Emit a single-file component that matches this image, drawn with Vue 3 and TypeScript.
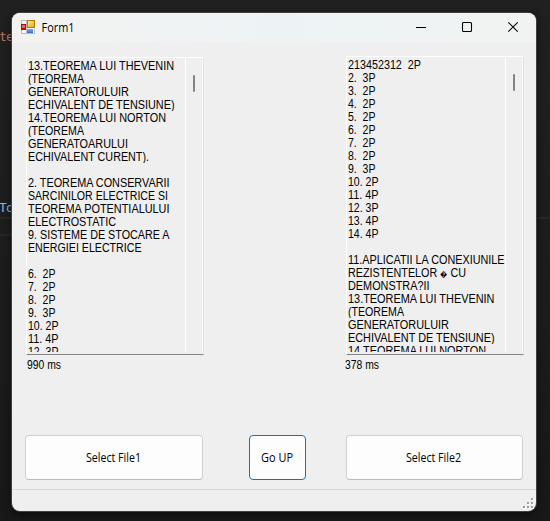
<script setup lang="ts">
interface Line {
  text: string
  width: number
}

interface Panel {
  id: string
  lines: Line[]
  elapsed: Line
}

const line = (text: string, width: number): Line => ({ text, width })

// Short "question / points" rows share one width per digit count.
const scores = (...rows: string[]): Line[] =>
  rows.map((text) => line(text, text.startsWith('1') ? 30.5 : 27.5))

const blank: Line = line('', 0)

// Splits a row so that the undecodable character can be set smaller.
const parts = (text: string): string[] => text.split(/(\uFFFD)/)

const panels: Panel[] = [
  {
    id: 'left',
    lines: [
      line('13.TEOREMA LUI THEVENIN', 146),
      line('(TEOREMA', 56),
      line('GENERATORULUIR', 101),
      line('ECHIVALENT DE TENSIUNE)', 146.5),
      line('14.TEOREMA LUI NORTON', 138),
      line('(TEOREMA', 56),
      line('GENERATOARULUI', 100),
      line('ECHIVALENT CURENT).', 121),
      blank,
      line('2. TEOREMA CONSERVARII', 141.5),
      line('SARCINILOR ELECTRICE SI', 140),
      line('TEOREMA POTENTIALULUI', 141.5),
      line('ELECTROSTATIC', 88),
      line('9. SISTEME DE STOCARE A', 141.5),
      line('ENERGIEI ELECTRICE', 113.5),
      blank,
      ...scores('6.  2P', '7.  2P', '8.  2P', '9.  3P', '10. 2P', '11. 4P', '12. 3P'),
    ],
    elapsed: line('990 ms', 34),
  },
  {
    id: 'right',
    lines: [
      line('213452312  2P', 73),
      ...scores('2.  3P', '3.  2P', '4.  2P', '5.  2P', '6.  2P', '7.  2P', '8.  2P', '9.  3P'),
      ...scores('10. 2P', '11. 4P', '12. 3P', '13. 4P', '14. 4P'),
      blank,
      line('11.APLICATII LA CONEXIUNILE', 156.5),
      line('REZISTENTELOR \uFFFD CU', 118),
      line('DEMONSTRA?II', 81.5),
      line('13.TEOREMA LUI THEVENIN', 146.5),
      line('(TEOREMA', 56),
      line('GENERATORULUIR', 101),
      line('ECHIVALENT DE TENSIUNE)', 146.5),
      line('14.TEOREMA LUI NORTON', 138),
    ],
    elapsed: line('378 ms', 34),
  },
]
</script>

<template>
  <div class="desktop">
    <div class="editor">
      <span class="code string">te</span>
      <span class="code type">To</span>
      <i class="rule first"></i>
      <i class="rule second"></i>
    </div>
    <main class="window">
      <header class="titlebar">
        <svg class="app-icon" width="14" height="14" viewBox="0 0 14 14">
          <defs>
            <linearGradient id="gold" x2="1" y2="1"><stop stop-color="#ffed9b" /><stop offset="1" stop-color="#e9aa00" /></linearGradient>
            <linearGradient id="blue" x2="0" y2="1"><stop stop-color="#7eb1fa" /><stop offset="1" stop-color="#2c67d1" /></linearGradient>
          </defs>
          <path fill="#bcbcbc" d="M0 0h14v14H0z" />
          <path fill="#f5f5f5" d="M1 1h4v3H1zM1 10h4v3H1zM12 9h1v4h-1z" />
          <path fill="#a90f08" d="M0 4h5v6H0z" />
          <path fill="#e46b5e" d="M1 5h3v3H1z" />
          <path fill="#b67c00" d="M6 0h8v8H6z" />
          <path fill="url(#gold)" d="M7 1h6v6H7z" />
          <path fill="#eee" d="M5 8h9v1H5z" />
          <path fill="url(#blue)" d="M6 9h6v4H6z" />
        </svg>
        <svg class="title" width="40" height="18"><text x="0.5" y="13" textLength="33" lengthAdjust="spacingAndGlyphs">Form1</text></svg>
        <nav class="controls">
          <svg width="12" height="12" viewBox="0 0 12 12"><path d="M1 6.5h10" /></svg>
          <svg width="12" height="12" viewBox="0 0 12 12"><rect x="1.5" y="1.5" width="9" height="9" rx="1" /></svg>
          <svg width="12" height="12" viewBox="0 0 12 12"><path d="M1.3 1.3l9.4 9.4M10.7 1.3l-9.4 9.4" /></svg>
        </nav>
      </header>

      <section class="outputs">
        <article v-for="panel in panels" :key="panel.id" class="panel" :class="panel.id">
          <div class="box">
            <div class="content">
              <svg v-for="(row, i) in panel.lines" :key="i" class="row" width="158" height="13">
                <text v-if="row.text" x="0" y="11" :textLength="row.width" lengthAdjust="spacingAndGlyphs"><tspan v-for="(part, j) in parts(row.text)" :key="j" :class="{ unknown: part === '\uFFFD' }">{{ part }}</tspan></text>
              </svg>
            </div>
            <div class="scroll"><i class="thumb"></i></div>
          </div>
          <svg class="elapsed" width="60" height="16">
            <text x="0" y="12" :textLength="panel.elapsed.width" lengthAdjust="spacingAndGlyphs">{{ panel.elapsed.text }}</text>
          </svg>
        </article>
      </section>

      <section class="actions">
        <button class="file"><svg width="56" height="16"><text x="0" y="12" textLength="55" lengthAdjust="spacingAndGlyphs">Select File1</text></svg></button>
        <button class="up"><svg width="34" height="16"><text x="0" y="12" textLength="32" lengthAdjust="spacingAndGlyphs">Go UP</text></svg></button>
        <button class="file second"><svg width="57" height="16"><text x="0" y="12" textLength="55" lengthAdjust="spacingAndGlyphs">Select File2</text></svg></button>
      </section>

      <footer class="status">
        <svg width="12" height="12" viewBox="0 0 12 12">
          <path fill="#fff" d="M9 1h2v2H9zM5 5h2v2H5zM9 5h2v2H9zM1 9h2v2H1zM5 9h2v2H5zM9 9h2v2H9z" />
          <path fill="#9b9b9b" d="M8 0h2v2H8zM4 4h2v2H4zM8 4h2v2H8zM0 8h2v2H0zM4 8h2v2H4zM8 8h2v2H8z" />
        </svg>
      </footer>
    </main>
  </div>
</template>

<style>
body {
  margin: 0;
  background: #1e1e1e;
}
</style>

<style scoped>
* {
  box-sizing: border-box;
}
svg {
  display: block;
  flex: none;
}
.desktop {
  position: relative;
  width: 550px;
  height: 521px;
  padding: 13px 14px 10px 12px;
  overflow: hidden;
  background: linear-gradient(#202020, #1c1c1c 60%, #181818);
}
.editor {
  position: absolute;
  inset: 0;
}
.code {
  position: absolute;
  left: -1px;
  font: 13px/16px "DejaVu Sans Mono", monospace;
  letter-spacing: -0.8px;
}
.string {
  top: 29px;
  color: #b87660;
}
.type {
  top: 200px;
  color: #82b9e3;
}
.rule {
  position: absolute;
  left: 0;
  right: 0;
  height: 2px;
  background: #272727;
}
.first {
  top: 217px;
}
.second {
  top: 234px;
}
.window {
  position: relative;
  display: flex;
  flex-direction: column;
  width: 524px;
  height: 498px;
  border-radius: 8px;
  overflow: hidden;
  background: #efefef;
  box-shadow: 0 0 0 1px #414141, 0 3px 8px #0009;
}
.titlebar {
  display: flex;
  align-items: center;
  height: 30px;
  flex: none;
  padding: 0 17px 0 9px;
  background: linear-gradient(90deg, #f3f2f1, #edf3f5 50%, #f1f3f2);
}
.app-icon {
  margin-top: -2px;
}
.title {
  margin: 0 0 0 6px;
  font: 13px "Open Sans", sans-serif;
}
.controls {
  display: flex;
  gap: 34px;
  margin: -2px 0 0 auto;
}
.controls path,
.controls rect {
  fill: none;
  stroke: #000;
  stroke-width: 1.1;
}
.outputs {
  display: flex;
  justify-content: space-between;
  height: 392px;
  flex: none;
  padding: 13px 12px 0 14px;
}
.panel {
  width: 178px;
  font: 12px "Liberation Sans", Arial, sans-serif;
}
.left {
  padding-top: 1px;
}
.box {
  display: flex;
  height: 299px;
  border: 1px solid #fff;
  border-right: 1px solid #e3e3e3;
  border-bottom: 1px solid #838383;
}
.left .box {
  height: 298px;
}
.content {
  width: 159px;
  height: 295px;
  padding: 1px 0 0 1px;
  overflow: hidden;
  border-right: 1px solid #fff;
}
.left .content {
  height: 294px;
}
.row text {
  white-space: pre;
}
.unknown {
  font-size: 8px;
}
.scroll {
  flex: 1;
  display: flex;
  justify-content: center;
  border-right: 1px solid #f8f8f8;
}
.thumb {
  width: 2px;
  height: 17px;
  margin-top: 17px;
  border-radius: 1px;
  background: #858585;
}
.elapsed {
  margin: 2px 0 0 1px;
}
.right .elapsed {
  margin-left: -1px;
}
.actions {
  display: flex;
  height: 54px;
  flex: none;
  padding: 0 13px;
  align-items: flex-start;
}
button {
  display: flex;
  align-items: center;
  justify-content: center;
  height: 45px;
  padding: 0;
  border: 1px solid #d0d0d0;
  border-bottom-color: #bababa;
  border-radius: 4px;
  background: #fdfdfd;
  color: #000;
  font: 12px "Open Sans", sans-serif;
}
.file {
  width: 178px;
}
.up {
  width: 57px;
  margin: 0 40px 0 46px;
  border-color: #0874cb;
}
.second {
  width: 177px;
}
.status {
  flex: 1;
  display: flex;
  justify-content: flex-end;
  align-items: flex-end;
  padding: 0 1px 1px 0;
  border-top: 1px solid #d7d7d7;
}
</style>
